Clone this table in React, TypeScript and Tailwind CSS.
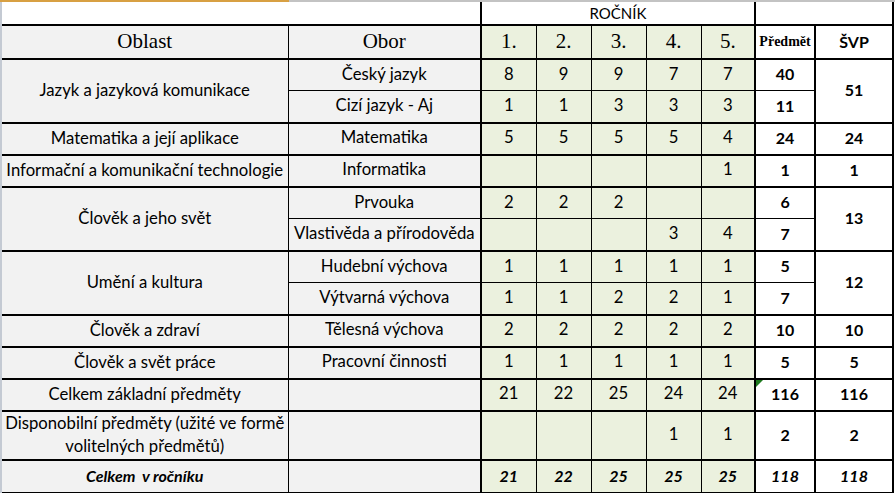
import React from "react";

type Row = {
  oblast?: { text: React.ReactNode; span: number };
  obor: string;
  grades: (number | null)[];
  predmet: number;
  svp?: { value: number; span: number };
  groupStart: boolean;
  tall?: boolean;
};

const rows: Row[] = [
  {
    oblast: { text: "Jazyk a jazyková komunikace", span: 2 },
    obor: "Český jazyk",
    grades: [8, 9, 9, 7, 7],
    predmet: 40,
    svp: { value: 51, span: 2 },
    groupStart: true,
  },
  { obor: "Cizí jazyk - Aj", grades: [1, 1, 3, 3, 3], predmet: 11, groupStart: false },
  {
    oblast: { text: "Matematika a její aplikace", span: 1 },
    obor: "Matematika",
    grades: [5, 5, 5, 5, 4],
    predmet: 24,
    svp: { value: 24, span: 1 },
    groupStart: true,
  },
  {
    oblast: { text: "Informační a komunikační technologie", span: 1 },
    obor: "Informatika",
    grades: [null, null, null, null, 1],
    predmet: 1,
    svp: { value: 1, span: 1 },
    groupStart: true,
  },
  {
    oblast: { text: "Člověk a jeho svět", span: 2 },
    obor: "Prvouka",
    grades: [2, 2, 2, null, null],
    predmet: 6,
    svp: { value: 13, span: 2 },
    groupStart: true,
  },
  {
    obor: "Vlastivěda a přírodověda",
    grades: [null, null, null, 3, 4],
    predmet: 7,
    groupStart: false,
  },
  {
    oblast: { text: "Umění a kultura", span: 2 },
    obor: "Hudební výchova",
    grades: [1, 1, 1, 1, 1],
    predmet: 5,
    svp: { value: 12, span: 2 },
    groupStart: true,
  },
  { obor: "Výtvarná výchova", grades: [1, 1, 2, 2, 1], predmet: 7, groupStart: false },
  {
    oblast: { text: "Člověk a zdraví", span: 1 },
    obor: "Tělesná výchova",
    grades: [2, 2, 2, 2, 2],
    predmet: 10,
    svp: { value: 10, span: 1 },
    groupStart: true,
  },
  {
    oblast: { text: "Člověk a svět práce", span: 1 },
    obor: "Pracovní činnosti",
    grades: [1, 1, 1, 1, 1],
    predmet: 5,
    svp: { value: 5, span: 1 },
    groupStart: true,
  },
  {
    oblast: { text: "Celkem základní předměty", span: 1 },
    obor: "",
    grades: [21, 22, 25, 24, 24],
    predmet: 116,
    svp: { value: 116, span: 1 },
    groupStart: true,
  },
  {
    oblast: {
      text: (
        <>
          Disponobilní předměty (užité ve formě
          <br />
          volitelných předmětů)
        </>
      ),
      span: 1,
    },
    obor: "",
    grades: [null, null, null, 1, 1],
    predmet: 2,
    svp: { value: 2, span: 1 },
    groupStart: true,
    tall: true,
  },
];

const gradeBorder = ["border-r", "border-r", "border-r", "border-r", "border-r-2"];

export default function App() {
  return (
    <div className="w-[895px] h-[493px] bg-white overflow-hidden font-['Lato',sans-serif] text-[16.7px] text-black">
      {/* spreadsheet selection edge */}
      <div className="flex h-[2px]">
        <div className="w-[289px] bg-[#d8a043]" />
        <div className="flex-1 bg-[#c3c3c3]" />
      </div>

      <div className="border-l-2 border-[#c4cad3] h-[491px]">
        <table className="table-fixed border-collapse w-[891px]">
          <colgroup>
            <col className="w-[286px]" />
            <col className="w-[193px]" />
            <col className="w-[55px]" />
            <col className="w-[55px]" />
            <col className="w-[55px]" />
            <col className="w-[55px]" />
            <col className="w-[54px]" />
            <col className="w-[60px]" />
            <col className="w-[78px]" />
          </colgroup>
          <tbody>
            {/* ROČNÍK row */}
            <tr className="h-[23px]">
              <td colSpan={2} className="p-0" />
              <td
                colSpan={5}
                className="p-0 text-center text-[15px] leading-none border-l-2 border-r-2 border-black"
              >
                ROČNÍK
              </td>
              <td colSpan={2} className="p-0 border-l-2 border-r-2 border-black" />
            </tr>

            {/* header */}
            <tr className="h-[32px] font-['Liberation_Serif',serif]">
              <td className="p-0 text-center text-[21px] bg-[#f2f2f2] border-t-2 border-r border-black">
                Oblast
              </td>
              <td className="p-0 text-center text-[21px] bg-[#f2f2f2] border-t-2 border-r-2 border-black">
                Obor
              </td>
              {["1.", "2.", "3.", "4.", "5."].map((g, i) => (
                <td
                  key={g}
                  className={`p-0 text-center text-[21px] bg-[#ebf1de] border-t-2 border-black ${gradeBorder[i]}`}
                >
                  {g}
                </td>
              ))}
              <td className="p-0 text-center text-[14px] font-bold bg-white border-t-2 border-r-2 border-black">
                Předmět
              </td>
              <td className="p-0 text-center text-[16px] font-bold font-['Lato',sans-serif] bg-white border-t-2 border-r-2 border-black">
                ŠVP
              </td>
            </tr>

            {rows.map((r, idx) => {
              const top = r.groupStart ? "border-t-2" : "border-t";
              return (
                <tr key={idx} className={r.tall ? "h-[48px]" : "h-[32px]"}>
                  {r.oblast && (
                    <td
                      rowSpan={r.oblast.span}
                      className={`p-0 pb-px text-center leading-[23px] bg-[#f2f2f2] border-r border-black ${top}`}
                    >
                      {r.oblast.text}
                    </td>
                  )}
                  <td className={`p-0 pb-px text-center bg-[#f2f2f2] border-r-2 border-black ${top}`}>
                    {r.obor}
                  </td>
                  {r.grades.map((g, i) => (
                    <td
                      key={i}
                      className={`p-0 pb-px text-center bg-[#ebf1de] border-black ${top} ${gradeBorder[i]}`}
                    >
                      {g ?? ""}
                    </td>
                  ))}
                  <td
                    className={`relative p-0 pb-px text-center text-[16px] font-bold bg-white border-r-2 border-black ${top}`}
                  >
                    {r.predmet === 116 && (
                      <span className="absolute top-0 left-0 w-0 h-0 border-t-[7px] border-t-[#1f7a1f] border-r-[7px] border-r-transparent" />
                    )}
                    {r.predmet}
                  </td>
                  {r.svp && (
                    <td
                      rowSpan={r.svp.span}
                      className={`p-0 pb-px text-center text-[16px] font-bold bg-white border-r-2 border-black ${top}`}
                    >
                      {r.svp.value}
                    </td>
                  )}
                </tr>
              );
            })}

            {/* total */}
            <tr className="h-[33px] font-bold italic text-[16px]">
              <td className="p-0 pb-px text-center bg-[#f2f2f2] border-t-2 border-b-2 border-r border-black whitespace-pre">
                {"Celkem  v ročníku"}
              </td>
              <td className="p-0 bg-[#f2f2f2] border-t-2 border-b-2 border-r-2 border-black" />
              {[21, 22, 25, 25, 25].map((g, i) => (
                <td
                  key={i}
                  className={`p-0 pb-px text-center bg-[#ebf1de] border-t-2 border-b-2 border-black ${gradeBorder[i]}`}
                >
                  {g}
                </td>
              ))}
              <td className="p-0 pb-px text-center bg-white border-t-2 border-b-2 border-r-2 border-black">
                118
              </td>
              <td className="p-0 pb-px text-center bg-white border-t-2 border-b-2 border-r-2 border-black">
                118
              </td>
            </tr>
          </tbody>
        </table>
      </div>
    </div>
  );
}
